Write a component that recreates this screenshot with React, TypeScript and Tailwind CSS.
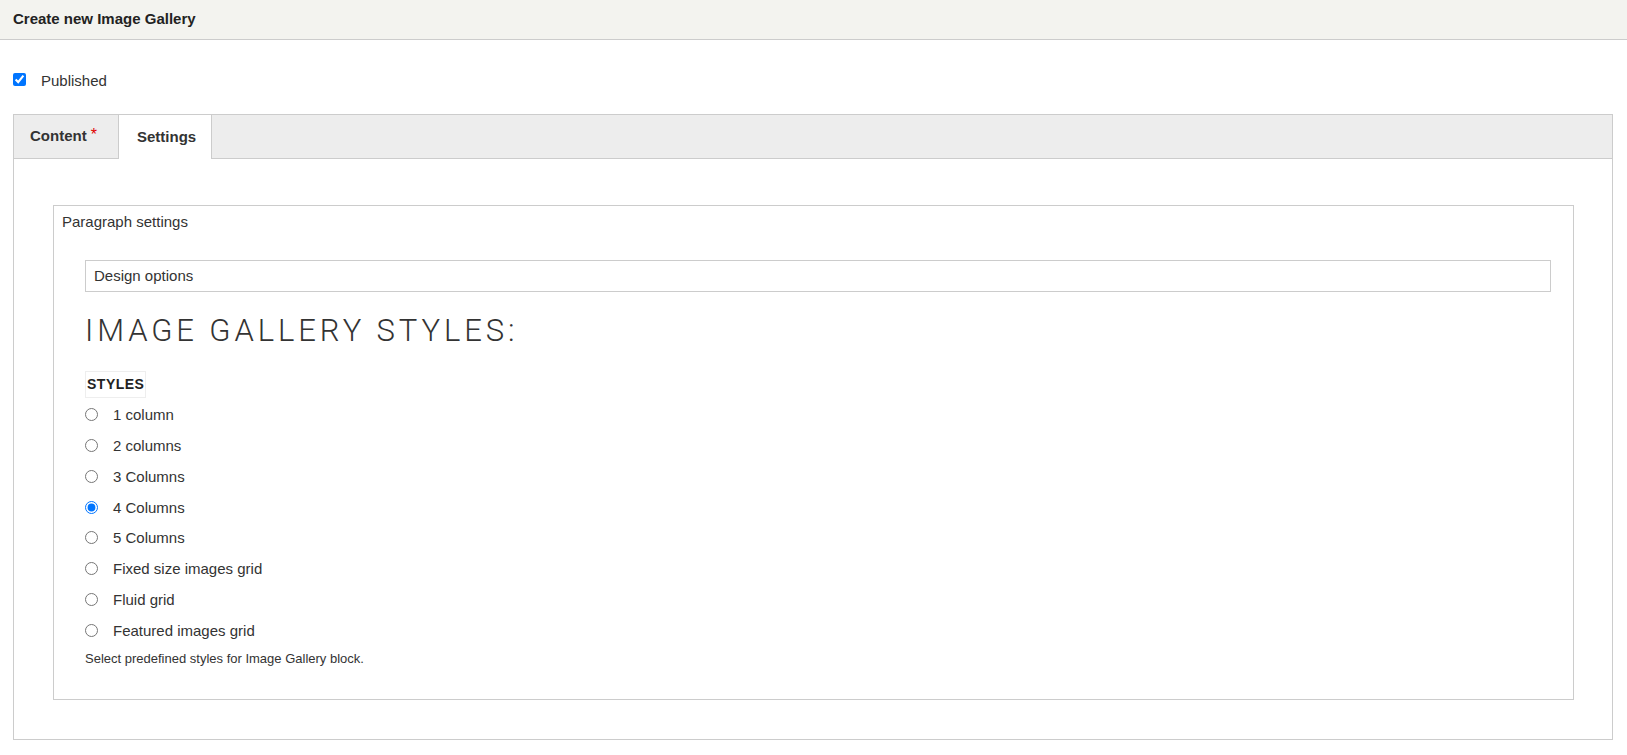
import React, { useState } from 'react';

const STYLE_OPTIONS = [
  '1 column',
  '2 columns',
  '3 Columns',
  '4 Columns',
  '5 Columns',
  'Fixed size images grid',
  'Fluid grid',
  'Featured images grid',
];

export default function App() {
  const [published, setPublished] = useState(true);
  const [style, setStyle] = useState('4 Columns');

  return (
    <div className="min-h-screen bg-white text-[#333] font-['Liberation_Sans',Arial,sans-serif]">
      {/* Page title bar */}
      <div className="h-[40px] px-[13px] flex items-center bg-[#f3f3ef] border-b border-[#ccc]">
        <h1 className="text-[15px] font-bold text-[#222]">Create new Image Gallery</h1>
      </div>

      {/* Published toggle */}
      <label className="mt-[32px] ml-[13px] flex items-start gap-[15px] w-fit cursor-pointer">
        <input
          type="checkbox"
          checked={published}
          onChange={(e) => setPublished(e.target.checked)}
          className="m-0 w-[13px] h-[13px] mt-[1px]"
        />
        <span className="text-[15px] leading-[17px]">Published</span>
      </label>

      {/* Tabs */}
      <div className="mt-[25px] ml-[13px] mr-[14px] border border-[#ccc]">
        <div className="flex h-[44px] bg-[#ededed] border-b border-[#ccc]">
          <button className="w-[105px] h-[43px] pl-[16px] flex items-center border-r border-[#ccc] text-[15px] font-bold text-[#333]">
            Content
            <span className="ml-[4px] text-[16px] leading-none font-normal text-[#e00000] relative -top-[2px]">*</span>
          </button>
          <button className="w-[93px] h-[44px] pl-[18px] flex items-center bg-white border-r border-[#ccc] text-[15px] font-bold text-[#333]">
            Settings
          </button>
        </div>

        {/* Tab panel */}
        <div className="pt-[46px] pl-[39px] pr-[38px] pb-[39px]">
          <div className="border border-[#ccc] pt-[7px] pl-[8px] pb-[33px]">
            <div className="text-[15px] leading-[17px]">Paragraph settings</div>

            <div className="mt-[30px] ml-[23px] mr-[22px]">
              <div className="h-[32px] border border-[#ccc] pl-[8px] flex items-center text-[15px]">
                Design options
              </div>

              <h2 className="mt-[20px] text-[31px] leading-[38px] font-light tracking-[3.9px] text-[#333] font-['Roboto',sans-serif]">
                IMAGE GALLERY STYLES:
              </h2>

              <div className="mt-[21px] w-[61px] h-[27px] border border-[#eee] pl-[1px] flex items-center text-[14px] font-bold tracking-[0.5px] text-[#222]">
                STYLES
              </div>

              <div className="mt-[1px] flex flex-col">
                {STYLE_OPTIONS.map((opt) => (
                  <label key={opt} className="h-[30.86px] flex items-center gap-[15px] cursor-pointer">
                    <input
                      type="radio"
                      name="styles"
                      checked={style === opt}
                      onChange={() => setStyle(opt)}
                      className="m-0 w-[13px] h-[13px]"
                    />
                    <span className="text-[15px] leading-[17px]">{opt}</span>
                  </label>
                ))}
              </div>

              <p className="mt-[5px] text-[13px] leading-[15px] text-[#333]">
                Select predefined styles for Image Gallery block.
              </p>
            </div>
          </div>
        </div>
      </div>
    </div>
  );
}
